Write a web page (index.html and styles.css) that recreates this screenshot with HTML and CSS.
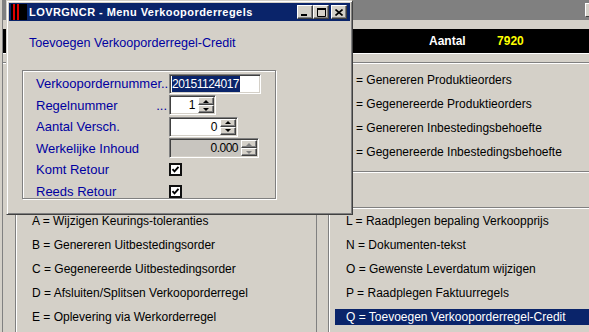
FILE: index.html
```html
<!DOCTYPE html>
<html lang="nl">
<head>
  <meta charset="UTF-8" />
  <title>LOVRGNCR - Menu Verkooporderregels</title>
  <link rel="stylesheet" href="styles.css">
</head>
<body>
  <div class="app">
    <div class="app-title"><span class="cap-btn"></span></div>
    <div class="app-strip"></div>
    <div class="info-bar">
      <span class="info-label">Aantal</span>
      <span class="info-value">7920</span>
    </div>

    <div class="menu">
      <div class="menu-top"></div>
      <ul class="menu-list menu-top">
        <li>= Genereren Produktieorders</li>
        <li>= Gegenereerde Produktieorders</li>
        <li>= Genereren Inbestedingsbehoefte</li>
        <li>= Gegenereerde Inbestedingsbehoefte</li>
      </ul>

      <div class="menu-rule"></div>

      <ul class="menu-list menu-box box-left">
        <li>A = Wijzigen Keurings-toleranties</li>
        <li>B = Genereren Uitbestedingsorder</li>
        <li>C = Gegenereerde Uitbestedingsorder</li>
        <li>D = Afsluiten/Splitsen Verkooporderregel</li>
        <li>E = Oplevering via Werkorderregel</li>
      </ul>
      <ul class="menu-list menu-box box-right">
        <li>L = Raadplegen bepaling Verkoopprijs</li>
        <li>N = Dokumenten-tekst</li>
        <li>O = Gewenste Leverdatum wijzigen</li>
        <li>P = Raadplegen Faktuurregels</li>
        <li class="selected">Q = Toevoegen Verkooporderregel-Credit</li>
      </ul>
    </div>
  </div>

  <div class="dialog">
    <div class="title-bar">
      <svg class="title-icon" width="16" height="16" viewBox="0 0 16 16">
        <rect width="16" height="16" fill="#000"/>
        <rect x="2" y="0" width="2" height="16" fill="#e00000"/>
        <rect x="6" y="0" width="2" height="16" fill="#e00000"/>
      </svg>
      <span class="title-text">LOVRGNCR - Menu Verkooporderregels</span>
      <div class="title-buttons">
        <span class="tb-btn">
          <svg width="8" height="8" viewBox="0 0 8 8"><rect x="0" y="6" width="6" height="2" fill="#000"/></svg>
        </span>
        <span class="tb-btn">
          <svg width="9" height="9" viewBox="0 0 9 9"><path d="M0.5 1.5h8v7h-8z" fill="none" stroke="#000"/><rect x="0" y="0" width="9" height="2" fill="#000"/></svg>
        </span>
        <span class="tb-btn tb-close">
          <svg width="8" height="7" viewBox="0 0 8 7"><path d="M0.5 0.5l7 6M7.5 0.5l-7 6" stroke="#000" stroke-width="1.6"/></svg>
        </span>
      </div>
    </div>

    <div class="dialog-body">
      <div class="dialog-heading">Toevoegen Verkooporderregel-Credit</div>

      <div class="group">
        <label class="lbl">Verkoopordernummer..</label>
        <div class="field f-order"><span class="sel">20151124017</span></div>

        <label class="lbl lbl-dots"><span>Regelnummer</span><span>...</span></label>
        <div class="field f-line">
          <span class="num">1</span>
          <span class="spin"><span class="spin-btn"><i class="up"></i></span><span class="spin-btn"><i class="down"></i></span></span>
        </div>

        <label class="lbl">Aantal Versch.</label>
        <div class="field f-qty">
          <span class="num">0</span>
          <span class="spin"><span class="spin-btn"><i class="up"></i></span><span class="spin-btn"><i class="down"></i></span></span>
        </div>

        <label class="lbl">Werkelijke Inhoud</label>
        <div class="field f-content disabled">
          <span class="num">0.000</span>
          <span class="spin"><span class="spin-btn"><i class="up"></i></span><span class="spin-btn"><i class="down"></i></span></span>
        </div>

        <label class="lbl">Komt Retour</label>
        <span class="check"><svg width="9" height="9" viewBox="0 0 9 9"><path d="M1.5 4.2l2 2.2 4-4.6" fill="none" stroke="#000" stroke-width="1.9"/></svg></span>

        <label class="lbl">Reeds Retour</label>
        <span class="check"><svg width="9" height="9" viewBox="0 0 9 9"><path d="M1.5 4.2l2 2.2 4-4.6" fill="none" stroke="#000" stroke-width="1.9"/></svg></span>
      </div>
    </div>
  </div>
</body>
</html>
```

FILE: styles.css
```css
* {
  box-sizing: border-box;
}
body {
  margin: 0;
  width: 589px;
  height: 332px;
  overflow: hidden;
  position: relative;
  background: #d4d0c8;
  color: #000;
  font-family: "Liberation Sans", Arial, sans-serif;
  font-size: 12px;
}

/* background window */
.app {
  margin-left: 2px;
  width: 587px;
  height: 332px;
  border-left: 1px solid #808080;
  overflow: hidden;
}
.app-title {
  height: 20px;
  background: #808080;
  display: flex;
  align-items: center;
}
.cap-btn {
  margin-left: auto;
  width: 4px;
  height: 14px;
  background: #d4d0c8;
  border: 1px solid #fff;
  border-right: none;
  border-bottom-color: #404040;
}
.app-strip {
  height: 9px;
}
.info-bar {
  height: 25px;
  background: #000;
  border-bottom: 1px solid #fff;
  padding-left: 426px;
  line-height: 24px;
  font-weight: bold;
  font-size: 12px;
}
.info-label {
  color: #fff;
}
.info-value {
  color: #ffff00;
  margin-left: 28px;
}

.menu {
  margin-top: 8px;
  border-top: 1px solid #808080;
  box-shadow: inset 0 1px #fff;
  display: grid;
  grid-template-columns: 302px 1fr;
  column-gap: 11px;
  padding-left: 12px;
}
.menu-list {
  list-style: none;
  margin: 0;
  display: flex;
  flex-direction: column;
  gap: 8px;
}
.menu-list li {
  line-height: 16px;
  height: 16px;
  white-space: nowrap;
}
.menu-top {
  padding: 9px 0 0 28px;
}
.menu-rule {
  grid-column: 1 / -1;
  margin-top: 11px;
  height: 2px;
  border-top: 1px solid #808080;
  background: #fff;
}
.menu-box {
  margin-top: 34px;
  height: 130px;
  padding-top: 5px;
  border-top: 1px solid #808080;
  border-left: 1px solid #808080;
  box-shadow: inset 1px 1px #fff;
}
.box-left {
  padding-left: 16px;
  border-right: 1px solid #808080;
}
.box-right {
  padding-left: 6px;
}
.box-right li {
  padding-left: 11px;
}
.box-right li.selected {
  background: #0a246a;
  color: #fff;
}

/* dialog window */
.dialog {
  position: absolute;
  left: 6px;
  top: 0;
  width: 347px;
  height: 215px;
  padding: 2px;
  background: #d4d0c8;
  border: 1px solid;
  border-color: #d4d0c8 #404040 #404040 #d4d0c8;
  box-shadow: inset 1px 1px #fff, inset -1px -1px #808080;
  font-size: 13px;
}
.title-bar {
  height: 18px;
  background: #0a246a;
  display: flex;
  align-items: center;
  color: #fff;
  font-weight: bold;
  font-size: 11px;
}
.title-icon {
  margin-left: 2px;
  display: block;
}
.title-text {
  margin-left: 2px;
  white-space: nowrap;
  letter-spacing: 0.45px;
}
.title-buttons {
  margin-left: auto;
  margin-right: 3px;
  display: flex;
}
.tb-btn {
  width: 16px;
  height: 14px;
  background: #d4d0c8;
  border: 1px solid;
  border-color: #fff #404040 #404040 #fff;
  box-shadow: inset -1px -1px #808080;
  display: flex;
  align-items: center;
  justify-content: center;
}
.tb-btn svg {
  display: block;
}
.tb-close {
  margin-left: 2px;
}

.dialog-body {
  padding: 14px 0 0 13px;
}
.dialog-heading {
  margin-left: 7px;
  line-height: 16px;
  font-size: 12.6px;
  color: #0000a0;
}
.group {
  margin-top: 19px;
  width: 254px;
  height: 129px;
  border: 1px solid #808080;
  box-shadow: inset 1px 1px #fff, 1px 1px #fff;
  padding: 2px 0 0 13px;
  display: grid;
  grid-template-columns: 133px auto;
  grid-auto-rows: 21.5px;
  align-items: center;
  justify-items: start;
}
.lbl {
  color: #0000a0;
  white-space: nowrap;
  line-height: 15px;
}
.lbl-dots {
  width: 100%;
  display: flex;
  justify-content: space-between;
  padding-right: 2px;
}

.field {
  height: 20px;
  padding: 1px;
  background: #fff;
  border: 1px solid;
  border-color: #808080 #fff #fff #808080;
  box-shadow: inset 1px 1px #404040, inset -1px -1px #d4d0c8;
  display: flex;
  align-items: stretch;
  font-size: 12px;
  letter-spacing: -0.5px;
}
.field.disabled {
  background: #c8c5bf;
}
.f-order {
  width: 92px;
  padding-left: 2px;
}
.f-line {
  width: 47px;
}
.f-qty {
  width: 69px;
}
.f-content {
  width: 90px;
}
.sel {
  background: #0a246a;
  color: #fff;
  line-height: 16px;
  padding-right: 1px;
}
.num {
  flex: 1;
  text-align: right;
  padding-right: 3px;
  line-height: 16px;
}
.spin {
  width: 16px;
  display: flex;
  flex-direction: column;
}
.spin-btn {
  flex: 1;
  background: #d4d0c8;
  border: 1px solid;
  border-color: #fff #404040 #404040 #fff;
  box-shadow: inset -1px -1px #808080;
  display: flex;
  align-items: center;
  justify-content: center;
}
.spin-btn i {
  width: 0;
  height: 0;
  border-left: 3px solid transparent;
  border-right: 3px solid transparent;
}
.spin-btn i.up {
  border-bottom: 3px solid #000;
}
.spin-btn i.down {
  border-top: 3px solid #000;
}
.disabled .spin-btn i.up {
  border-bottom-color: #808080;
}
.disabled .spin-btn i.down {
  border-top-color: #808080;
}
.check {
  width: 13px;
  height: 13px;
  background: #fff;
  border: 2px solid #101010;
  display: flex;
  align-items: center;
  justify-content: center;
}
.check svg {
  display: block;
}
```
